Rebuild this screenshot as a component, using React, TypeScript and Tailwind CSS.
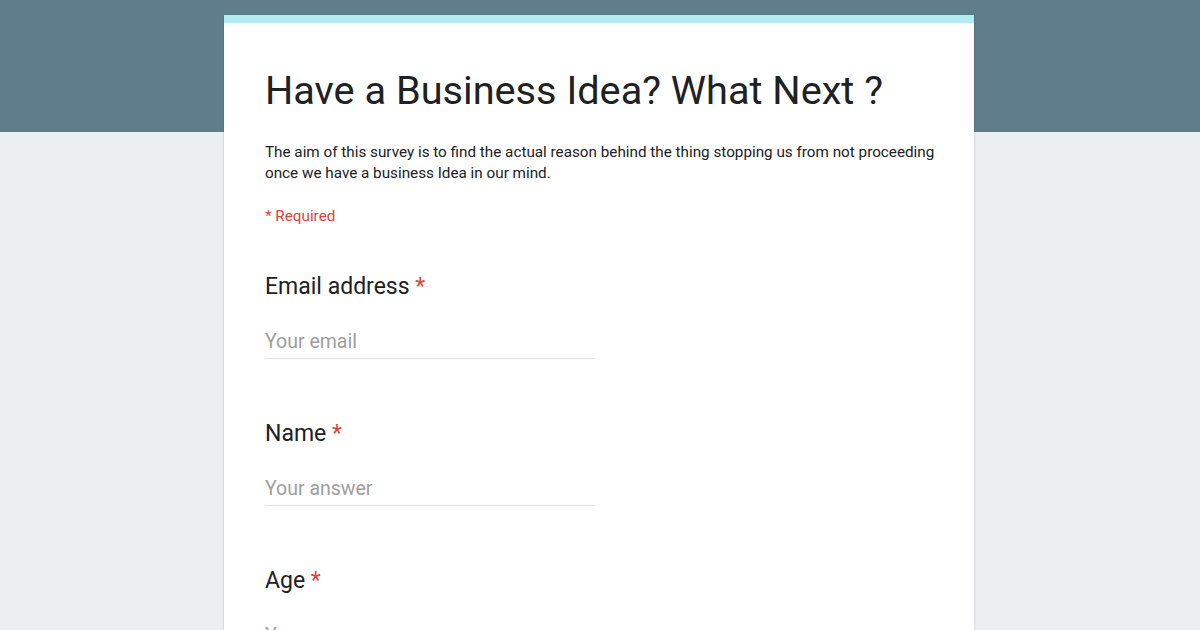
import React from "react";

const questions = [
  { label: "Email address", placeholder: "Your email" },
  { label: "Name", placeholder: "Your answer" },
  { label: "Age", placeholder: "Your answer" },
];

const Question = ({ label, placeholder }: { label: string; placeholder: string }) => (
  <div>
    <div className="text-[23px] leading-[30px] text-[#202124]">
      {label} <span className="text-[#db4437]">*</span>
    </div>
    <div className="mt-[27px] w-[330px] border-b border-[#e0e0e0] pb-[3px] text-[19.5px] leading-[26px] text-[#9e9e9e]">
      {placeholder}
    </div>
  </div>
);

export default function App() {
  return (
    <div
      className="h-[630px] overflow-hidden bg-[linear-gradient(#607d8b_0,#607d8b_132px,#eceff1_132px)] pt-[15px]"
      style={{ fontFamily: "Roboto, Arial, sans-serif" }}
    >
      <div className="mx-auto w-[750px] translate-x-[-1px] border-t-[8px] border-[#b2ebf2] bg-white pl-[41px] pr-[32px] pt-[42px] pb-10 shadow-[0_1px_2px_rgba(0,0,0,0.25)]">
        <h1 className="text-[39.7px] leading-[52px] text-[#202124]">
          Have a Business Idea? What Next ?
        </h1>
        <p className="mt-[25px] text-[15.25px] leading-[21px] text-[#202124]">
          The aim of this survey is to find the actual reason behind the thing stopping us from not proceeding
          once we have a business Idea in our mind.
        </p>
        <div className="mt-[22px] text-[15.25px] leading-[21px] text-[#db4437]">* Required</div>
        <div className="mt-[45px] flex flex-col gap-[60px]">
          {questions.map((q) => (
            <Question key={q.label} label={q.label} placeholder={q.placeholder} />
          ))}
        </div>
      </div>
    </div>
  );
}
